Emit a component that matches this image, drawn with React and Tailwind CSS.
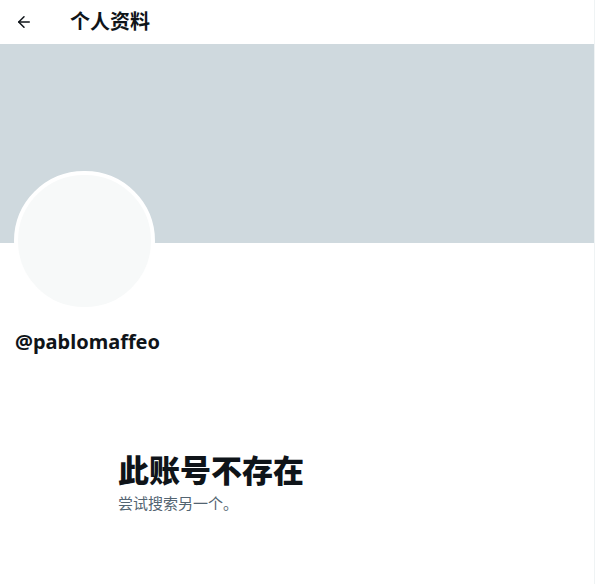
import { ArrowLeft } from "lucide-react";

function App() {
    return (
        <div className="w-[597px] h-[584px] bg-white overflow-hidden" style={{ fontFamily: '"Noto Sans", "Noto Sans CJK SC", sans-serif' }}>
            <div className="w-[595px] h-full border-r border-[#eff3f4]">
                {/* header */}
                <div className="h-[44px] flex items-center px-[15px]">
                    <ArrowLeft className="w-[18px] h-[18px] text-[#0f1419]" strokeWidth={2} />
                    <h2 className="ml-[37px] text-[20px] font-bold text-[#0f1419] leading-none">个人资料</h2>
                </div>
                {/* banner */}
                <div className="h-[199px] w-[594px] bg-[#cfd9de]"></div>
                {/* avatar */}
                <div className="px-[14px] -mt-[72px]">
                    <div className="w-[141px] h-[140px] rounded-full bg-[#f7f9f9] border-[4px] border-white"></div>
                </div>
                <div className="px-[15px] mt-[19px]">
                    <div className="text-[20px] font-bold text-[#0f1419] leading-[24px]">@pablomaffeo</div>
                </div>
                {/* empty state */}
                <div className="pl-[118px] mt-[98px]">
                    <div className="text-[31px] font-extrabold text-[#0f1419] leading-[36px]">此账号不存在</div>
                    <div className="mt-[5px] text-[15px] text-[#536471] leading-[20px]">尝试搜索另一个。</div>
                </div>
            </div>
        </div>
    );
}

export default App;
